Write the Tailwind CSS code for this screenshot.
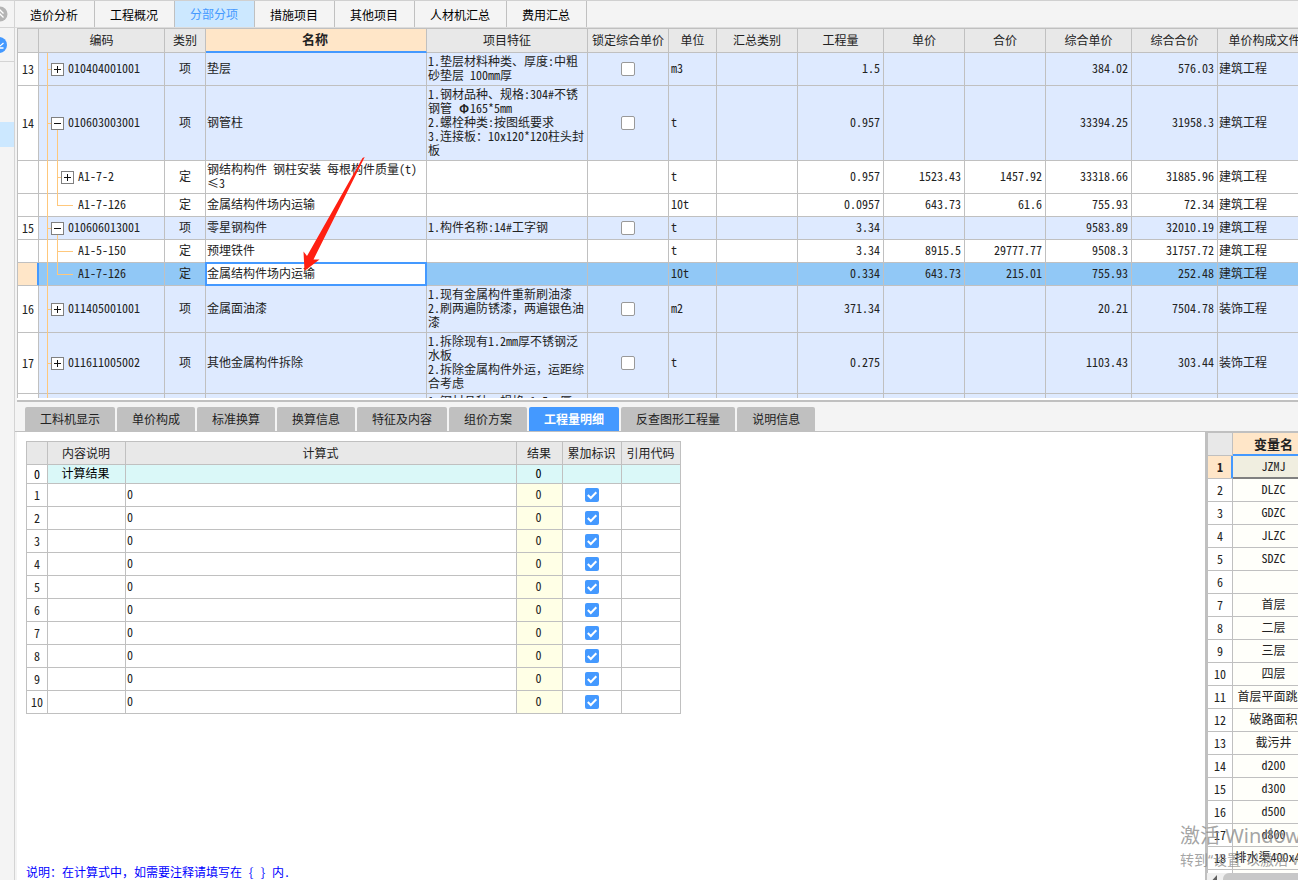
<!DOCTYPE html>
<html lang="zh-CN">
<head>
<meta charset="utf-8">
<title>分部分项</title>
<script src="https://cdn.jsdelivr.net/npm/@tailwindcss/browser@4"></script>
</head>
<body class="flex h-screen overflow-hidden bg-[#f4f4f4] font-['Noto_Sans_CJK_SC',sans-serif] text-xs leading-[14px] text-[#222] [font-feature-settings:'hwid']">

<!-- Collapsed side rail -->
<aside class="flex w-[15px] shrink-0 flex-col border-r border-t border-[#d4d4d4]">
  <button aria-label="收起" class="flex h-[27px] items-center border-b border-[#d4d4d4]">
    <svg class="-ml-2 size-4 shrink-0" viewBox="0 0 16 16"><circle cx="8" cy="8" r="7.5" fill="#b4b4b4"/><path d="M4.500 7.500 8 4l3.500 3.500M4.500 11.500 8 8l3.500 3.500" fill="none" stroke="#fff" stroke-width="1.300"/></svg>
  </button>
  <button aria-label="展开" class="flex h-[34px] items-center border-b border-[#d4d4d4]">
    <svg class="-ml-[9px] size-4 shrink-0" viewBox="0 0 16 16"><circle cx="8" cy="8" r="8" fill="#4499ff"/><path d="M6 6.500 9 9l3.500-3M6 11h6.500" fill="none" stroke="#fff" stroke-width="1.300"/></svg>
  </button>
  <div class="mt-[60px] h-[25px] bg-[#cce8ff]"></div>
</aside>

<main class="flex min-w-0 flex-1 flex-col">
  <nav id="topTabs" class="flex h-7 shrink-0 border-b border-t border-b-[#dcdcdc] border-t-[#d0d0d0]"></nav>

  <section class="relative ml-0.5 h-[374px] shrink-0 overflow-hidden border-b-2 border-[#c0c0c0] bg-white">
    <div class="h-[370px] overflow-hidden">
      <table class="w-[1295px] table-fixed border-separate border-spacing-0 border-l border-t border-[#c0c0c0]">
        <colgroup><col class="w-[21px]"><col class="w-[126px]"><col class="w-[41px]"><col class="w-[221px]"><col class="w-[161px]"><col class="w-[81px]"><col class="w-[48px]"><col class="w-[81px]"><col class="w-[86px]"><col class="w-[81px]"><col class="w-[81px]"><col class="w-[86px]"><col class="w-[86px]"><col class="w-[94px]"></colgroup>
        <thead><tr id="mainHead" class="h-6"></tr></thead>
        <tbody id="mainBody"></tbody>
      </table>
    </div>
  </section>

  <nav id="subTabs" class="flex h-[30px] shrink-0 items-end gap-0.5 border-b border-[#c0c0c0] pl-[10px]"></nav>

  <div class="ml-0.5 flex min-h-0 flex-1 bg-white">
    <section class="flex min-w-0 flex-1 flex-col justify-between pl-[9px] pt-[9px]">
      <table class="w-[655px] table-fixed border-separate border-spacing-0 border-l border-t border-[#c0c0c0]">
        <colgroup><col class="w-[21px]"><col class="w-[78px]"><col class="w-[391px]"><col class="w-[46px]"><col class="w-[59px]"><col class="w-[59px]"></colgroup>
        <thead><tr id="calcHead" class="h-[23px]"></tr></thead>
        <tbody id="calcBody"></tbody>
      </table>
      <p class="whitespace-pre pb-px text-[#0000ff]">说明：在计算式中<span class="[font-feature-settings:normal]">，</span>如需要注释请填写在 { } 内.</p>
    </section>

    <aside class="flex w-[93px] shrink-0 flex-col overflow-hidden border-l-2 border-[#c0c0c0]">
      <div class="min-h-0 flex-1 overflow-hidden">
        <table class="w-[108px] table-fixed border-separate border-spacing-0 border-l border-t border-[#c0c0c0]">
          <colgroup><col class="w-[25px]"><col class="w-[82px]"></colgroup>
          <thead><tr class="h-[23px]">
            <th class="border-b border-r border-[#c0c0c0] bg-[#e8e8e8] p-0"></th>
            <th class="border-b-2 border-r border-b-[#4499ff] border-r-[#c0c0c0] bg-[#ffe6c8] p-0 text-[13px] font-bold">变量名</th>
          </tr></thead>
          <tbody id="varBody"></tbody>
        </table>
      </div>
      <div class="flex h-[7px] shrink-0 items-start gap-1 bg-[#f0f0f0] pl-1">
        <svg class="h-[7px] w-2 shrink-0" viewBox="0 0 8 7"><path d="M6 2v5H1.500z" fill="#606060"/></svg>
        <div class="h-[7px] flex-1 rounded-tl-md bg-[#c8c8c8]"></div>
      </div>
    </aside>
  </div>
</main>

<!-- Hand-drawn pointer over the selected row -->
<svg class="pointer-events-none absolute left-[300px] top-[155px] h-[118px] w-[68px]" viewBox="0 0 68 118"><path d="M64.700 2 62.500 3 7 101 3.500 96.500 4.500 116 19.500 104.500 13.500 104.500z" fill="#ff2012"/></svg>

<!-- System activation notice -->
<div class="pointer-events-none absolute bottom-0 right-0 h-[60px] w-[118px] overflow-hidden whitespace-nowrap font-['Noto_Sans','Noto_Sans_CJK_SC',sans-serif] text-[#8c8c8c]/80 [font-feature-settings:normal]">
  <p class="mt-0.5 text-xl leading-7">激活 Windows</p>
  <p class="text-sm leading-5">转到“设置”以激活 Windows。</p>
</div>

<script>
const byId = id => document.getElementById(id);

byId('topTabs').innerHTML = ['造价分析', '工程概况', '分部分项', '措施项目', '其他项目', '人材机汇总', '费用汇总'].map(t =>
  `<button class="border-r border-[#c0c0c0] pl-[15px] pr-4 whitespace-nowrap ${t === '分部分项' ? 'bg-[#cce8ff] text-[#4499ff]' : 'pt-0.5 text-black'}">${t}</button>`).join('');

byId('subTabs').innerHTML = ['工料机显示', '单价构成', '标准换算', '换算信息', '特征及内容', '组价方案', '工程量明细', '反查图形工程量', '说明信息'].map(t =>
  `<button class="h-6 rounded-t-xs px-[15px] whitespace-nowrap ${t === '工程量明细' ? 'bg-[#4499ff] font-bold text-white' : 'bg-[#c0c0c0]'}">${t}</button>`).join('');

byId('mainHead').innerHTML = ['', '编码', '类别', '名称', '项目特征', '锁定综合单价', '单位', '汇总类别', '工程量', '单价', '合价', '综合单价', '综合合价', '单价构成文件'].map(t =>
  t === '名称'
    ? `<th class="border-b-2 border-r border-b-[#4499ff] border-r-[#c0c0c0] bg-[#ffe6c8] pt-0 pl-0 pr-0.5 pb-0.5 text-[13px] font-bold">${t}</th>`
    : `<th class="border-b border-r border-[#c0c0c0] bg-[#e8e8e8] p-0 pb-0.5 font-normal whitespace-nowrap">${t}</th>`).join('');

// The wide comma and phi take a full character cell
const comma = '<span class="[font-feature-settings:normal]">，</span>';
const phi = '<span class="inline-block w-3 text-center font-bold">Φ</span>';

// [no, node kind, code, name, features, unit, qty, price, total, unit price, sum, file, row height]
const rows = [
  ['13', 'plus', '010404001001', '垫层', '1.垫层材料种类、厚度:中粗<br>砂垫层 100mm厚', 'm3', '1.5', '', '', '384.02', '576.03', '建筑工程', 'h-[33px]'],
  ['14', 'minus', '010603003001', '钢管柱', `1.钢材品种、规格:304#不锈<br>钢管 ${phi}165*5mm<br>2.螺栓种类:按图纸要求<br>3.连接板：10x120*120柱头封<br>板`, 't', '0.957', '', '', '33394.25', '31958.3', '建筑工程', 'h-[75px]'],
  ['', 'childPlus', 'A1-7-2', '钢结构构件 钢柱安装 每根构件质量(t)<br>≤3', '', 't', '0.957', '1523.43', '1457.92', '33318.66', '31885.96', '建筑工程', 'h-[33px]'],
  ['', 'last', 'A1-7-126', '金属结构件场内运输', '', '10t', '0.0957', '643.73', '61.6', '755.93', '72.34', '建筑工程', 'h-[23px]'],
  ['15', 'minus', '010606013001', '零星钢构件', '1.构件名称:14#工字钢', 't', '3.34', '', '', '9583.89', '32010.19', '建筑工程', 'h-[23px]'],
  ['', 'leaf', 'A1-5-150', '预埋铁件', '', 't', '3.34', '8915.5', '29777.77', '9508.3', '31757.72', '建筑工程', 'h-[23px]'],
  ['', 'last', 'A1-7-126', '金属结构件场内运输', '', '10t', '0.334', '643.73', '215.01', '755.93', '252.48', '建筑工程', 'h-[23px]', true],
  ['16', 'plus', '011405001001', '金属面油漆', `1.现有金属构件重新刷油漆<br>2.刷两遍防锈漆${comma}两遍银色油<br>漆`, 'm2', '371.34', '', '', '20.21', '7504.78', '装饰工程', 'h-[47px]'],
  ['17', 'plus', '011611005002', '其他金属构件拆除', `1.拆除现有1.2mm厚不锈钢泛<br>水板<br>2.拆除金属构件外运${comma}运距综<br>合考虑`, 't', '0.275', '', '', '1103.43', '303.44', '装饰工程', 'h-[61px]'],
  ['', 'none', '', '', '1.钢材品种、规格:1.5mm厚', '', '', '', '', '', '', '', 'h-[19px] align-top'],
];

const line = c => `<span class="absolute bg-[#ffc87c] ${c}"></span>`;
const box = plus => `<button aria-label="${plus ? '展开' : '折叠'}" class="relative size-[13px] shrink-0 border border-[#808080] bg-white"><svg class="size-[11px]" viewBox="0 0 11 11"><path d="${plus ? 'M2 5.500h7M5.500 2v7' : 'M2 5.500h7'}" stroke="#111"/></svg></button>`;
const trunk = line('left-2 top-0 -bottom-px w-px');
const code = t => `<span class="pb-0.5">${t}</span>`;
const tree = {
  plus: t => trunk + line('left-2 top-1/2 h-px w-1') + `<div class="flex items-center gap-1 pl-3">${box(true)}${code(t)}</div>`,
  minus: t => trunk + line('left-2 top-1/2 h-px w-1') + line('left-[18px] top-1/2 -bottom-px w-px') + `<div class="flex items-center gap-1 pl-3">${box(false)}${code(t)}</div>`,
  childPlus: t => trunk + line('left-[18px] top-0 -bottom-px w-px') + line('left-[18px] top-1/2 h-px w-1') + `<div class="flex items-center gap-1 pl-[22px]">${box(true)}${code(t)}</div>`,
  leaf: t => trunk + line('left-[18px] top-0 -bottom-px w-px') + line('left-[18px] top-1/2 h-px w-4') + `<div class="pb-0.5 pl-[39px]">${t}</div>`,
  last: t => trunk + line('left-[18px] top-0 bottom-1/2 w-px') + line('left-[18px] top-1/2 h-px w-4') + `<div class="pb-0.5 pl-[39px]">${t}</div>`,
  none: () => trunk,
};
const cell = 'border-b border-r border-[#c0c0c0] p-0 whitespace-nowrap';
const text = 'border-b border-r border-[#c0c0c0] p-0 pb-0.5 whitespace-nowrap';

byId('mainBody').innerHTML = rows.map(([no, kind, codeText, name, feat, unit, qty, price, total, uprice, sum, file, h, selected]) => {
  const top = kind === 'plus' || kind === 'minus';
  const bg = selected ? 'bg-[#91c8f6]' : top || kind === 'none' ? 'bg-[#deeaff]' : 'bg-white';
  return `<tr class="${h} ${bg}">
    <th class="${cell} font-normal ${selected ? 'border-r-[#4499ff] bg-[#ffe6c8] shadow-[inset_-1px_0_#4499ff]' : 'bg-white'}">${no}</th>
    <td class="${cell} relative">${tree[kind](codeText)}</td>
    <td class="${text} text-center">${kind === 'none' ? '' : top ? '项' : '定'}</td>
    <td class="${text} relative pl-px ${selected ? 'bg-white' : ''}">${name}${selected ? '<span class="absolute -inset-px border-2 border-[#4499ff]"></span>' : ''}</td>
    <td class="${text} pl-px">${feat}</td>
    <td class="${cell}">${top ? '<input type="checkbox" aria-label="锁定综合单价" class="mx-auto block size-3.5 appearance-none rounded-xs border border-[#999] bg-white">' : ''}</td>
    <td class="${text} pl-0.5">${unit}</td>
    <td class="${cell}"></td>
    ${[qty, price, total, uprice, sum].map(v => `<td class="${text} pr-[3px] text-right">${v}</td>`).join('')}
    <td class="${text} pl-px">${file}</td>
  </tr>`;
}).join('');

byId('calcHead').innerHTML = ['', '内容说明', '计算式', '结果', '累加标识', '引用代码'].map(t =>
  `<th class="${cell} bg-[#e8e8e8] pr-px font-normal">${t}</th>`).join('');

byId('calcBody').innerHTML = `<tr class="h-[19px] bg-[#daf8f8] text-black">
    <th class="${cell} bg-white font-normal">0</th><td class="${text} pr-0.5 text-center">计算结果</td><td class="${cell}"></td><td class="${text} pr-0.5 text-center">0</td><td class="${cell}"></td><td class="${cell}"></td></tr>` +
  Array.from({ length: 10 }, (_, i) => `<tr class="h-[23px]">
    <th class="${cell} font-normal">${i + 1}</th><td class="${cell}"></td><td class="${text} pl-px">0</td><td class="${text} bg-[#ffffe6] pr-0.5 text-center">0</td>
    <td class="${cell}"><label class="mx-auto grid size-3.5"><input type="checkbox" checked aria-label="累加标识" class="col-start-1 row-start-1 size-3.5 appearance-none rounded-xs bg-[#4499ff]"><svg class="col-start-1 row-start-1 size-3.5" viewBox="0 0 14 14"><path d="M2.800 7 5.800 10 11.300 4.200" fill="none" stroke="#fff" stroke-width="2"/></svg></label></td>
    <td class="${cell}"></td></tr>`).join('');

byId('varBody').innerHTML = ['JZMJ', 'DLZC', 'GDZC', 'JLZC', 'SDZC', '', '首层', '二层', '三层', '四层', '首层平面跳线', '破路面积', '截污井', 'd200', 'd300', 'd500', 'd800', '排水渠400x400', ''].map((v, i) => i === 0
  ? `<tr class="h-[23px]"><th class="${cell} border-r-[#4499ff] bg-[#ffe6c8] font-bold shadow-[inset_-1px_0_#4499ff]">1</th><td class="border-b-2 border-r border-b-[#808080] border-r-[#c0c0c0] bg-[#f0eee0] p-0 pb-px text-center">${v}</td></tr>`
  : `<tr class="h-[23px]"><th class="${cell} font-normal">${i + 1}</th><td class="${text} bg-[#fffffa] text-center">${v}</td></tr>`).join('');
</script>
</body>
</html>
